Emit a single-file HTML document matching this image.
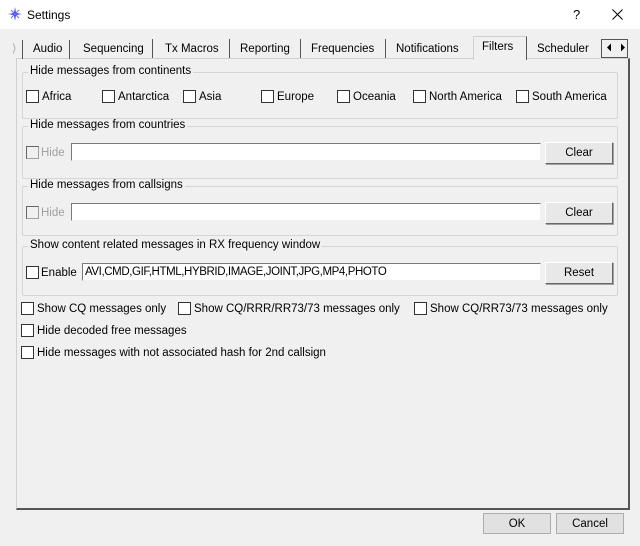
<!DOCTYPE html><html><head><style>
body{margin:0;width:640px;height:546px;background:#f0f0f0;font-family:"Liberation Sans",sans-serif;font-size:11.5px;color:#000;position:relative;overflow:hidden}
.a{position:absolute;white-space:nowrap}
.title{left:0;top:0;width:640px;height:29px;background:#fff}
.cb{position:absolute;width:11px;height:11px;border:1px solid #333;background:#fff}
.cbd{border-color:#a0a0a0;border-top-color:#666;border-left-color:#666;background:#f0f0f0}
.grp{position:absolute;border:1px solid #d5d5d5;border-radius:2px}
.gl{position:absolute;top:-8px;left:5px;background:#f0f0f0;padding:0 2px}
.tb{position:absolute;background:#fff;border:1px solid #7a7a7a;border-right-color:#f0f0f0;border-bottom-color:#f0f0f0;height:18px;box-sizing:border-box}
.btn{position:absolute;background:#e8e8e8;border:1px solid #fff;border-right-color:#6a6a6a;border-bottom-color:#6a6a6a;box-shadow:1px 1px 0 #a0a0a0;text-align:center;box-sizing:border-box;line-height:20px}
.tab{position:absolute;top:39px;height:19px;line-height:19px;border-right:1px solid #555}
.dis{color:#a0a0a0}
</style></head><body>
<div class="a title"></div>
<svg class="a" style="left:8px;top:7px" width="14" height="14" viewBox="0 0 14 14"><path d="M7 0L8 6L14 7L8 8L7 14L6 8L0 7L6 6Z" fill="#3a3af0"/><path d="M3 3L11 11M11 3L3 11" stroke="#6a6af5" stroke-width="1"/></svg>
<div class="a" style="left:27px;top:8px;font-size:12px">Settings</div>
<div class="a" style="left:573px;top:7px;font-size:13px">?</div>
<svg class="a" style="left:612px;top:9px" width="11" height="11"><path d="M0.5 0.5L10.5 10.5M10.5 0.5L0.5 10.5" stroke="#000" stroke-width="1"/></svg>
<div class="a" style="left:16px;top:58px;width:611px;height:449px;border:1px solid #d0d0d0;border-right:2px solid #555;border-bottom:2px solid #555;background:#f0f0f0"></div>
<div class="a" style="left:12px;top:41px;color:#aaa">⟩</div>
<div class="tab" style="left:22px;width:48px;border-left:1px solid #555;padding-left:10px;box-sizing:border-box;top:40px">Audio</div>
<div class="a" style="left:83px;top:43px">Sequencing</div><div class="tab" style="left:152px;width:0"></div>
<div class="a" style="left:165px;top:43px">Tx Macros</div><div class="tab" style="left:229px;width:0"></div>
<div class="a" style="left:240px;top:43px">Reporting</div><div class="tab" style="left:300px;width:0"></div>
<div class="a" style="left:311px;top:43px">Frequencies</div><div class="tab" style="left:385px;width:0"></div>
<div class="a" style="left:396px;top:43px">Notifications</div>
<div class="a" style="left:473px;top:36px;width:52px;height:23px;background:#f0f0f0;border:1px solid #d0d0d0;border-bottom:none;border-right:1px solid #555"></div>
<div class="a" style="left:482px;top:41px">Filters</div>
<div class="a" style="left:537px;top:43px">Scheduler</div>
<div class="a" style="left:601px;top:39px;width:13px;height:17px;border:1px solid #555;background:#f0f0f0"></div>
<div class="a" style="left:614px;top:39px;width:13px;height:17px;border:1px solid #555;border-left:none;background:#f0f0f0"></div>
<svg class="a" style="left:603px;top:43px" width="24" height="9"><path d="M4 4.5L8 0.5V8.5Z M18 0.5L22 4.5L18 8.5Z" fill="#000"/></svg>
<div class="grp" style="left:22px;top:72px;width:594px;height:45px"><span class="gl">Hide messages from continents</span></div>
<div class="cb" style="left:26px;top:90px"></div><div class="a" style="left:42px;top:91px">Africa</div>
<div class="cb" style="left:102px;top:90px"></div><div class="a" style="left:118px;top:91px">Antarctica</div>
<div class="cb" style="left:183px;top:90px"></div><div class="a" style="left:199px;top:91px">Asia</div>
<div class="cb" style="left:261px;top:90px"></div><div class="a" style="left:277px;top:91px">Europe</div>
<div class="cb" style="left:337px;top:90px"></div><div class="a" style="left:353px;top:91px">Oceania</div>
<div class="cb" style="left:413px;top:90px"></div><div class="a" style="left:429px;top:91px">North America</div>
<div class="cb" style="left:516px;top:90px"></div><div class="a" style="left:532px;top:91px">South America</div>
<div class="grp" style="left:22px;top:126px;width:594px;height:51px"><span class="gl">Hide messages from countries</span></div>
<div class="cb cbd" style="left:26px;top:146px"></div><div class="a dis" style="left:41px;top:147px">Hide</div>
<div class="tb" style="left:71px;top:143px;width:470px"></div>
<div class="btn" style="left:545px;top:142px;width:68px;height:22px">Clear</div>
<div class="grp" style="left:22px;top:186px;width:594px;height:48px"><span class="gl">Hide messages from callsigns</span></div>
<div class="cb cbd" style="left:26px;top:206px"></div><div class="a dis" style="left:41px;top:207px">Hide</div>
<div class="tb" style="left:71px;top:203px;width:470px"></div>
<div class="btn" style="left:545px;top:202px;width:68px;height:22px">Clear</div>
<div class="grp" style="left:22px;top:246px;width:594px;height:48px"><span class="gl">Show content related messages in RX frequency window</span></div>
<div class="cb" style="left:26px;top:266px"></div><div class="a" style="left:41px;top:267px">Enable</div>
<div class="tb" style="left:82px;top:263px;width:459px;padding:1px 2px;line-height:14px;letter-spacing:-0.4px">AVI,CMD,GIF,HTML,HYBRID,IMAGE,JOINT,JPG,MP4,PHOTO</div>
<div class="btn" style="left:545px;top:262px;width:68px;height:22px">Reset</div>
<div class="cb" style="left:21px;top:302px"></div><div class="a" style="left:37px;top:303px">Show CQ messages only</div>
<div class="cb" style="left:178px;top:302px"></div><div class="a" style="left:194px;top:303px">Show CQ/RRR/RR73/73 messages only</div>
<div class="cb" style="left:414px;top:302px"></div><div class="a" style="left:430px;top:303px">Show CQ/RR73/73 messages only</div>
<div class="cb" style="left:21px;top:324px"></div><div class="a" style="left:37px;top:325px">Hide decoded free messages</div>
<div class="cb" style="left:21px;top:346px"></div><div class="a" style="left:37px;top:347px">Hide messages with not associated hash for 2nd callsign</div>
<div class="btn" style="left:483px;top:513px;width:68px;height:21px;border:1px solid #adadad;box-shadow:none;background:#e1e1e1">OK</div>
<div class="btn" style="left:556px;top:513px;width:68px;height:21px;border:1px solid #adadad;box-shadow:none;background:#e1e1e1">Cancel</div>
</body></html>
